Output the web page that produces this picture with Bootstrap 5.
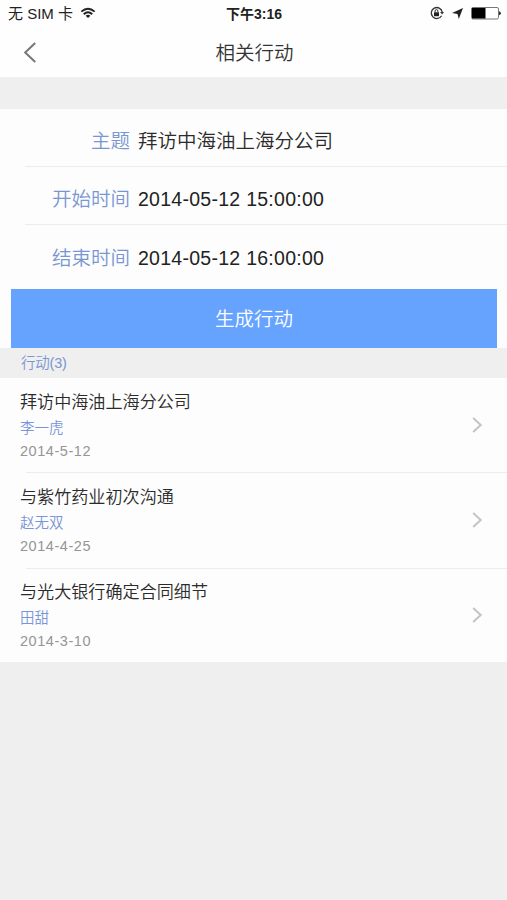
<!DOCTYPE html>
<html lang="zh-CN">
<head>
<meta charset="utf-8">
<meta name="viewport" content="width=device-width, initial-scale=1">
<title>相关行动</title>
<link href="https://cdn.jsdelivr.net/npm/bootstrap@5.3.0/dist/css/bootstrap.min.css" rel="stylesheet">
<style>
body{background:#efefef;color:#333;font-family:"Liberation Sans","Noto Sans CJK SC",sans-serif;overflow:hidden}
.app-top{height:77px;background:#fefefe}
.status{height:28px;font-size:15px;color:#222;padding:0 6px 0 8px;line-height:28px}
.status-time{font-size:14px;font-weight:700;color:#222;line-height:28px;padding-left:1px}
.wifi{margin:0 0 2px 7px}
.status-icons{padding-bottom:2px}
.title-bar{height:49px;padding-left:23px}
.title-text{font-size:19.5px;line-height:51px;font-weight:350;color:#333;padding-left:2px}
.fields{margin-top:32px;background:#fdfdfd}
.field{height:58px;margin-left:25px;border-bottom:1px solid #ececec;font-size:19.5px;line-height:29px;padding-top:7px}
.field:last-child{border:0;height:64px;padding-bottom:4px}
.field-name{width:105px;color:#7896d2;font-weight:350}
.field-text{color:#2b2b2b;margin-left:8px;font-weight:350}
.stamp{letter-spacing:.27px;color:#222}
.action-wrap{background:#fdfdfd;padding:0 10px 0 11px}
.btn-make{height:59px;background:#65a3ff;color:#fff;font-size:19.5px;font-weight:350;padding:2px 0 0}
.count{height:30px;padding-left:21px;font-size:14.5px;line-height:31px;color:#7a95d2;letter-spacing:-.2px;font-weight:350}
.entries{background:#fdfdfd}
.entry{height:94px;padding:0 24px 0 20px}
.entry.mid{height:96px}
.entry-title{font-size:17.1px;line-height:26px;color:#2b2b2b;padding-top:1px;font-weight:350}
.entry-name{font-size:14.5px;line-height:25px;color:#7a94d8;font-weight:350}
.entry-date{font-size:14.5px;line-height:20px;color:#959595;letter-spacing:.55px}
.rule{height:1px;margin:0 0 -1px 26px;background:#ececec}
</style>
<script src="https://cdn.jsdelivr.net/npm/bootstrap@5.3.0/dist/js/bootstrap.bundle.min.js"></script>
</head>
<body>
<header class="app-top">
  <div class="status d-flex justify-content-between align-items-center position-relative">
    <div class="d-flex align-items-center"><span>无 SIM 卡</span>
      <svg class="wifi" width="16" height="12" viewBox="0 0 16 13" fill="none" stroke="#222" stroke-width="2.1"><path d="M.8 5Q8-1.4 15.2 5M3.4 7.8Q8 3.7 12.6 7.8"/><path d="M5.4 9.4Q8 7.4 10.6 9.4L8 12z" fill="#222" stroke="none"/></svg>
    </div>
    <div class="status-time position-absolute top-0 start-50 translate-middle-x text-nowrap">下午3:16</div>
    <div class="status-icons d-flex align-items-center">
      <svg width="14" height="14" viewBox="0 0 14 14" fill="none" stroke="#333"><path d="M11.6 9.7A5.5 5.5 0 1 1 12.2 6" stroke-width="1.3"/><path d="M10.2 6h3.8l-1.9 2.6z" fill="#333" stroke="none"/><path d="M4 6.3h5v3.9H4z" fill="#222" stroke="none"/><path d="M5.1 6.5V5a1.4 1.4 0 0 1 2.8 0v1.5" stroke-width="1"/></svg>
      <svg class="ms-2" width="11" height="11" viewBox="0 0 11 11" fill="#222"><path d="M11 0 6.8 11 5.5 6 0 5z"/></svg>
      <svg class="ms-2" width="30" height="13" viewBox="0 0 30 13"><rect x=".5" y=".5" width="27" height="11.5" rx="1.5" fill="#fff" stroke="#777"/><path d="M1 1h13.5v10.5H1z" fill="#000"/><path d="M28 4.3Q30 4.7 30 6.3T28 8.3z" fill="#333"/></svg>
    </div>
  </div>
  <div class="title-bar d-flex align-items-center position-relative">
    <svg width="14" height="21" viewBox="0 0 14 21" fill="none" stroke="#777" stroke-width="2"><path d="M12.2 1 2.2 10.5l10 9.5"/></svg>
    <h1 class="title-text m-0 position-absolute top-0 start-50 translate-middle-x text-nowrap">相关行动</h1>
  </div>
</header>
<main>
  <section class="fields">
    <div class="field d-flex align-items-center"><div class="field-name text-end">主题</div><div class="field-text">拜访中海油上海分公司</div></div>
    <div class="field d-flex align-items-center"><div class="field-name text-end">开始时间</div><div class="field-text stamp">2014-05-12 15:00:00</div></div>
    <div class="field d-flex align-items-center"><div class="field-name text-end">结束时间</div><div class="field-text stamp">2014-05-12 16:00:00</div></div>
  </section>
  <div class="action-wrap"><button type="button" class="btn btn-make w-100 border-0 rounded-0">生成行动</button></div>
  <div class="count">行动(3)</div>
  <section class="entries">
    <div class="entry d-flex align-items-center justify-content-between">
      <div><div class="entry-title">拜访中海油上海分公司</div><div class="entry-name">李一虎</div><div class="entry-date">2014-5-12</div></div>
      <svg width="11" height="16" viewBox="0 0 11 16" fill="none" stroke="#c4c4c4" stroke-width="2"><path d="m1.2 1 7.5 7-7.5 7"/></svg>
    </div>
    <div class="rule"></div>
    <div class="entry mid d-flex align-items-center justify-content-between">
      <div><div class="entry-title">与紫竹药业初次沟通</div><div class="entry-name">赵无双</div><div class="entry-date">2014-4-25</div></div>
      <svg width="11" height="16" viewBox="0 0 11 16" fill="none" stroke="#c4c4c4" stroke-width="2"><path d="m1.2 1 7.5 7-7.5 7"/></svg>
    </div>
    <div class="rule"></div>
    <div class="entry d-flex align-items-center justify-content-between">
      <div><div class="entry-title">与光大银行确定合同细节</div><div class="entry-name">田甜</div><div class="entry-date">2014-3-10</div></div>
      <svg width="11" height="16" viewBox="0 0 11 16" fill="none" stroke="#c4c4c4" stroke-width="2"><path d="m1.2 1 7.5 7-7.5 7"/></svg>
    </div>
  </section>
</main>
</body>
</html>
